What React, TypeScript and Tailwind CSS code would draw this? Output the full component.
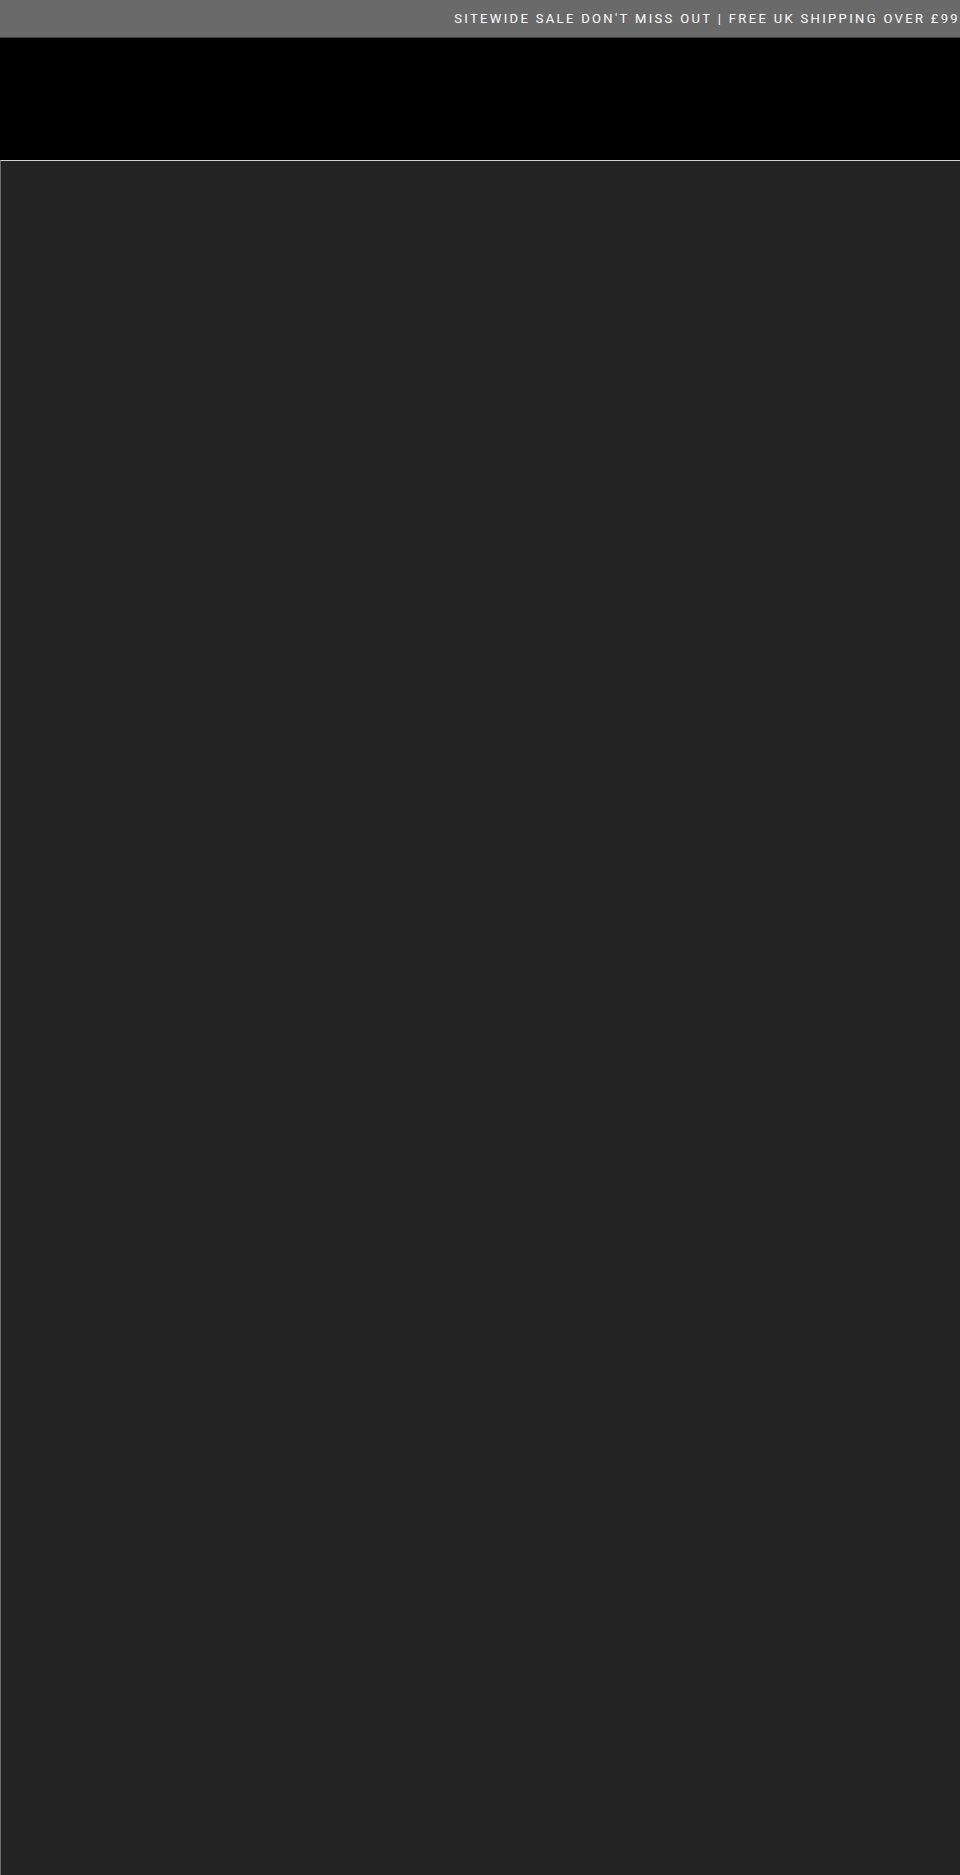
const announcement = "SITEWIDE SALE DON'T MISS OUT | FREE UK SHIPPING OVER £99";

function AnnouncementBar() {
  return (
    <div className="flex h-[38px] items-center justify-end overflow-hidden border-b border-[#3a3a3a] bg-[#6a6a6a]">
      <p className="whitespace-nowrap text-[13px] leading-5 tracking-[0.18em] text-white">
        {announcement}
      </p>
    </div>
  );
}

export default function App() {
  return (
    <div className="flex min-h-screen flex-col bg-black font-[Roboto,'Liberation_Sans',sans-serif]">
      <AnnouncementBar />

      <header className="h-[122px] bg-black" />

      <main className="flex-1 border-l border-t border-l-[#6a6a6a] border-t-[#d0d0d0] bg-[#242424]" />
    </div>
  );
}
